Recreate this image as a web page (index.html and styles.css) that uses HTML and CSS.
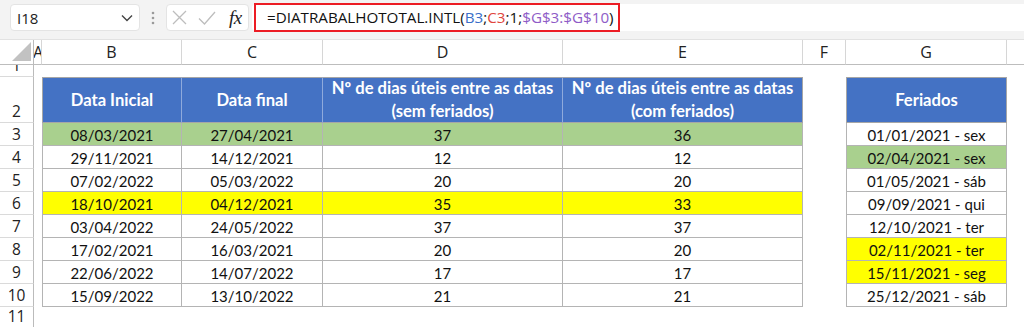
FILE: index.html
```html
<!DOCTYPE html>
<html lang="pt">
<head>
<meta charset="utf-8">
<title>DIATRABALHOTOTAL.INTL</title>
<link rel="stylesheet" href="styles.css">
</head>
<body>
<div class="fbar">
  <div class="namebox">
    <span class="nb-text">I18</span>
    <svg class="chev" width="12" height="8" viewBox="0 0 12 8"><path d="M1 1.5 L6 6.5 L11 1.5" fill="none" stroke="#444" stroke-width="1.4"/></svg>
  </div>
  <div class="dots">
    <svg width="4" height="14" viewBox="0 0 4 14"><circle cx="2" cy="2" r="1.3" fill="#9a9a9a"/><circle cx="2" cy="7" r="1.3" fill="#9a9a9a"/><circle cx="2" cy="12" r="1.3" fill="#9a9a9a"/></svg>
  </div>
  <div class="btns">
    <svg class="ic-x" width="15" height="15" viewBox="0 0 15 15"><path d="M1 1 L14 14 M14 1 L1 14" stroke="#bdbdbd" stroke-width="1.3" fill="none"/></svg>
    <svg class="ic-ok" width="18" height="14" viewBox="0 0 18 14"><path d="M1 7.5 L6.5 13 L17 1" stroke="#bdbdbd" stroke-width="1.3" fill="none"/></svg>
    <span class="fx">fx</span>
  </div>
  <div class="formula">
    <span class="frm">=DIATRABALHOTOTAL.INTL(<span class="r1">B3</span>;<span class="r2">C3</span>;1;<span class="r3">$G$3:$G$10</span>)</span>
  </div>
</div>

<div class="sheet">
  <!-- column headers -->
  <div class="ch corner"><svg width="20" height="20" viewBox="0 0 20 20"><polygon points="20,0 20,19 1,19" fill="#c2c2c2"/></svg></div>
  <div class="ch cha">A</div>
  <div class="ch">B</div>
  <div class="ch">C</div>
  <div class="ch">D</div>
  <div class="ch">E</div>
  <div class="ch">F</div>
  <div class="ch">G</div>
  <div class="ch last"></div>

  <!-- row 1 -->
  <div class="rh rh1"><span>1</span></div>
  <div></div><div></div><div></div><div></div><div></div><div></div><div></div><div></div>

  <!-- row 2 -->
  <div class="rh">2</div>
  <div></div>
  <div class="hd first">Data Inicial</div>
  <div class="hd">Data final</div>
  <div class="hd">Nº de dias úteis entre as datas<br>(sem feriados)</div>
  <div class="hd end">Nº de dias úteis entre as datas<br>(com feriados)</div>
  <div></div>
  <div class="hd first end">Feriados</div>
  <div></div>

  <!-- row 3 -->
  <div class="rh">3</div>
  <div></div>
  <div class="c first green">08/03/2021</div>
  <div class="c green">27/04/2021</div>
  <div class="c green">37</div>
  <div class="c green">36</div>
  <div></div>
  <div class="c first">01/01/2021 - sex</div>
  <div></div>

  <!-- row 4 -->
  <div class="rh">4</div>
  <div></div>
  <div class="c first">29/11/2021</div>
  <div class="c">14/12/2021</div>
  <div class="c">12</div>
  <div class="c">12</div>
  <div></div>
  <div class="c first green">02/04/2021 - sex</div>
  <div></div>

  <!-- row 5 -->
  <div class="rh">5</div>
  <div></div>
  <div class="c first">07/02/2022</div>
  <div class="c">05/03/2022</div>
  <div class="c">20</div>
  <div class="c">20</div>
  <div></div>
  <div class="c first">01/05/2021 - sáb</div>
  <div></div>

  <!-- row 6 -->
  <div class="rh">6</div>
  <div></div>
  <div class="c first yellow">18/10/2021</div>
  <div class="c yellow">04/12/2021</div>
  <div class="c yellow">35</div>
  <div class="c yellow">33</div>
  <div></div>
  <div class="c first">09/09/2021 - qui</div>
  <div></div>

  <!-- row 7 -->
  <div class="rh">7</div>
  <div></div>
  <div class="c first">03/04/2022</div>
  <div class="c">24/05/2022</div>
  <div class="c">37</div>
  <div class="c">37</div>
  <div></div>
  <div class="c first">12/10/2021 - ter</div>
  <div></div>

  <!-- row 8 -->
  <div class="rh">8</div>
  <div></div>
  <div class="c first">17/02/2021</div>
  <div class="c">16/03/2021</div>
  <div class="c">20</div>
  <div class="c">20</div>
  <div></div>
  <div class="c first yellow">02/11/2021 - ter</div>
  <div></div>

  <!-- row 9 -->
  <div class="rh">9</div>
  <div></div>
  <div class="c first">22/06/2022</div>
  <div class="c">14/07/2022</div>
  <div class="c">17</div>
  <div class="c">17</div>
  <div></div>
  <div class="c first yellow">15/11/2021 - seg</div>
  <div></div>

  <!-- row 10 -->
  <div class="rh">10</div>
  <div></div>
  <div class="c first">15/09/2022</div>
  <div class="c">13/10/2022</div>
  <div class="c">21</div>
  <div class="c">21</div>
  <div></div>
  <div class="c first">25/12/2021 - sáb</div>
  <div></div>

  <!-- row 11 -->
  <div class="rh rh11">11</div>
  <div></div><div></div><div></div><div></div><div></div><div></div><div></div><div></div>
</div>
</body>
</html>
```
FILE: styles.css
```css
html, body {
  margin: 0;
  padding: 0;
  background: #ffffff;
  overflow: hidden;
}
body {
  font-family: Lato, "Open Sans", sans-serif;
  color: #000;
}

/* ---------- formula bar ---------- */
.fbar {
  height: 40px;
  box-sizing: border-box;
  padding-top: 4px;
  background: #f3f3f3;
  display: flex;
  align-items: flex-start;
  border-bottom: 1px solid #e2e2e2;
}
.namebox {
  margin-left: 10px;
  width: 130px;
  height: 27px;
  box-sizing: border-box;
  background: #fff;
  border: 1px solid #e4e4e4;
  border-radius: 4px;
  display: flex;
  align-items: center;
  justify-content: space-between;
  padding: 0 6px 0 6px;
  font-family: "Open Sans", sans-serif;
  font-size: 15px;
  color: #222;
}
.dots {
  width: 26px;
  height: 27px;
  display: flex;
  align-items: center;
  justify-content: center;
}
.btns {
  width: 83px;
  height: 27px;
  box-sizing: border-box;
  background: #fff;
  border: 1px solid #e4e4e4;
  border-radius: 4px;
  display: flex;
  align-items: center;
  padding-left: 5px;
}
.ic-x { margin-right: 11px; }
.ic-ok { margin-right: 13px; }
.fx {
  font-family: "Liberation Serif", serif;
  font-style: italic;
  font-size: 19px;
  color: #222;
  letter-spacing: -0.5px;
}
.formula {
  margin-left: 3px;
  flex: 1;
  height: 27px;
  background: #fff;
  border-radius: 4px 0 0 4px;
  position: relative;
}
.frm {
  position: absolute;
  left: 2px;
  top: -1px;
  width: 366px;
  height: 29px;
  box-sizing: border-box;
  border: 2.5px solid #ec1c24;
  padding-left: 11px;
  font-family: "Open Sans", sans-serif;
  font-size: 15.2px;
  line-height: 24px;
  color: #111;
  white-space: nowrap;
}
.r1 { color: #3a6fc9; }
.r2 { color: #e0453c; }
.r3 { color: #8e5cc7; }

/* ---------- sheet grid ---------- */
.sheet {
  display: grid;
  grid-template-columns: 34px 8px 140px 141px 240px 240px 43px 161px 1fr;
  grid-template-rows: 25px 12px 46px repeat(8, 23px) 20px;
}
.ch {
  box-sizing: border-box;
  border-right: 1px solid #d6d6d6;
  border-bottom: 1px solid #bdbdbd;
  background: #fff;
  font-family: "Open Sans", sans-serif;
  font-size: 16px;
  color: #222;
  display: flex;
  align-items: center;
  justify-content: center;
  overflow: hidden;
}
.ch.last { border-right: none; }
.corner {
  border-right: 1px solid #bbbbbb;
  justify-content: flex-end;
  align-items: flex-end;
  padding: 0 2px 2px 0;
}
.cha {
  justify-content: flex-start;
  padding-left: 0;
  text-indent: -1px;
}
.rh {
  box-sizing: border-box;
  border-right: 1px solid #bbbbbb;
  border-bottom: 1px solid #dadada;
  background: #fff;
  font-family: "Open Sans", sans-serif;
  font-size: 15.5px;
  color: #222;
  display: flex;
  align-items: flex-end;
  justify-content: center;
  line-height: 21px;
  overflow: hidden;
}
.rh1 span { display: block; line-height: 12px; height: 12px; transform: translateY(-5px); }
.rh11 {
  align-items: flex-start;
  line-height: 17px;
  padding-top: 1px;
  border-bottom: none;
  overflow: visible;
}

.hd {
  box-sizing: border-box;
  background: #4472c4;
  color: #fff;
  font-weight: 700;
  font-size: 16.6px;
  line-height: 23px;
  text-align: center;
  display: flex;
  align-items: center;
  justify-content: center;
  border-top: 1px solid #a6a6a6;
  border-right: 1px solid #8faadc;
  border-bottom: 1px solid #a6a6a6;
}
.hd.first { border-left: 1px solid #a6a6a6; }
.hd.end { border-right: 1px solid #a6a6a6; }

.c {
  box-sizing: border-box;
  border-right: 1px solid #b4b4b4;
  border-bottom: 1px solid #b4b4b4;
  font-size: 15px;
  display: flex;
  align-items: center;
  justify-content: center;
  color: #111;
  padding-top: 1px;
}
.c.first { border-left: 1px solid #b4b4b4; }
.green { background: #a9d08e; }
.yellow { background: #ffff00; }
```
